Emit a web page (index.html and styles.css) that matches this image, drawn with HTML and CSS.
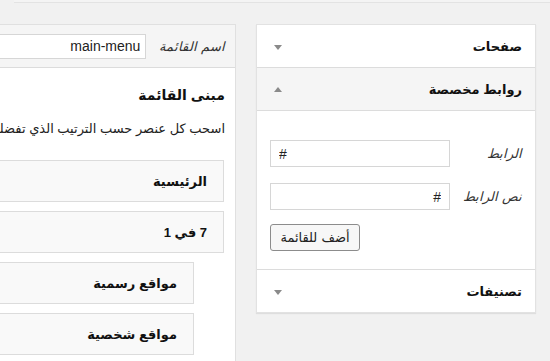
FILE: index.html
```html
<!DOCTYPE html>
<html lang="ar" dir="rtl">
<head>
<meta charset="utf-8">
<link rel="stylesheet" href="styles.css">
</head>
<body>
<div class="topbox"></div>
<div class="wrap">
  <div class="side">
    <div class="acc">
      <div class="acc-head"><span>صفحات</span><i class="arrow down"></i></div>
      <div class="acc-head open"><span>روابط مخصصة</span><i class="arrow up"></i></div>
      <div class="acc-body">
        <div class="row"><label class="lbl">الرابط</label><input class="field ltr" type="text" value="#"></div>
        <div class="row"><label class="lbl">نص الرابط</label><input class="field" type="text" value="#"></div>
        <div class="btn-row"><button class="btn">أضف للقائمة</button></div>
      </div>
      <div class="acc-head last"><span>تصنيفات</span><i class="arrow down"></i></div>
    </div>
  </div>
  <div class="main">
    <div class="main-head">
      <label class="lbl">اسم القائمة</label>
      <input class="name-input" type="text" value="main-menu">
    </div>
    <div class="main-body">
      <h3 class="title">مبنى القائمة</h3>
      <p class="desc">اسحب كل عنصر حسب الترتيب الذي تفضله. اضغط على السهم الموجود على يمين العنصر لإظهار خيارات ضبط إضافية.</p>
      <ul class="items">
        <li class="item">الرئيسية</li>
        <li class="item">7 في 1</li>
        <li class="item sub">مواقع رسمية</li>
        <li class="item sub">مواقع شخصية</li>
      </ul>
    </div>
  </div>
</div>
</body>
</html>
```

FILE: styles.css
```css
html, body {
  margin: 0;
  padding: 0;
  height: 100%;
  overflow: hidden;
}
body {
  background: #f1f1f1;
  font-family: "Liberation Sans", "DejaVu Sans", sans-serif;
  font-size: 13px;
  color: #222;
  direction: rtl;
}
.topbox {
  height: 2px;
  background: #f4f4f4;
  border-bottom: 1px solid #e3e3e3;
  margin-left: 14px;
}
.wrap {
  display: flex;
  flex-direction: row;
  gap: 20px;
  padding-top: 21px;
  padding-right: 14px;
}
.side {
  width: 280px;
  flex-shrink: 0;
}
.acc {
  background: #fff;
  border: 1px solid #e2e2e2;
  box-shadow: 0 1px 1px rgba(0,0,0,0.08);
}
.acc-head {
  height: 42px;
  display: flex;
  align-items: center;
  justify-content: space-between;
  padding: 0 13px 0 13px;
  border-bottom: 1px solid #dcdcdc;
  font-weight: bold;
  font-size: 13px;
  color: #111;
}
.acc-head.open {
  background: #f5f5f5;
}
.acc-head.last {
  border-bottom: 0;
}
.arrow {
  width: 0;
  height: 0;
  border-left: 4px solid transparent;
  border-right: 4px solid transparent;
  margin-left: 4px;
}
.arrow.down {
  border-top: 5px solid #8a8a8a;
  margin-top: 3px;
}
.arrow.up {
  border-bottom: 5px solid #8a8a8a;
}
.acc-body {
  padding: 29px 13px 18px 13px;
  border-bottom: 1px solid #dcdcdc;
}
.row {
  display: flex;
  align-items: center;
  justify-content: space-between;
  margin-bottom: 16px;
}
.row + .row {
  margin-bottom: 14px;
}
.lbl {
  font-style: italic;
  font-size: 13px;
  color: #333;
}
.field {
  width: 180px;
  height: 27px;
  box-sizing: border-box;
  border: 1px solid #d6d6d6;
  padding: 0 8px;
  font-family: "Liberation Sans", "DejaVu Sans", sans-serif;
  font-size: 14px;
  color: #222;
  background: #fff;
  margin: 0;
}
.field.ltr {
  direction: ltr;
}
.btn-row {
  display: flex;
  justify-content: flex-end;
}
.btn {
  height: 27px;
  width: 90px;
  box-sizing: border-box;
  border: 1px solid #8c8c8c;
  border-radius: 3px;
  background: #f7f7f7;
  font-family: "DejaVu Sans", sans-serif;
  font-size: 13px;
  color: #222;
  padding: 0;
}
.main {
  width: 460px;
  flex-shrink: 0;
  background: #fff;
  border: 1px solid #e0e0e0;
  border-bottom: 0;
  min-height: 400px;
}
.main-head {
  height: 42px;
  background: #f5f5f5;
  border-bottom: 1px solid #dcdcdc;
  display: flex;
  align-items: center;
  gap: 13px;
  padding-right: 10px;
}
.name-input {
  width: 250px;
  height: 25px;
  box-sizing: border-box;
  border: 1px solid #d6d6d6;
  padding: 0 5px;
  font-family: "Liberation Sans", sans-serif;
  font-size: 14px;
  color: #222;
  background: #fff;
  margin: 0;
}
.main-body {
  padding: 0 10px 0 0;
}
.title {
  margin: 18px 0 0 0;
  font-size: 14px;
  font-weight: bold;
  color: #111;
  line-height: 18px;
}
.desc {
  margin: 16px 0 0 0;
  white-space: nowrap;
  font-size: 13px;
  color: #222;
  line-height: 18px;
}
.items {
  list-style: none;
  margin: 22px 1px 0 0;
  padding: 0;
  display: flex;
  flex-direction: column;
  gap: 9px;
}
.item {
  height: 42px;
  box-sizing: border-box;
  background: #f9f9f9;
  border: 1px solid #dcdcdc;
  display: flex;
  align-items: center;
  padding-right: 16px;
  font-weight: bold;
  font-size: 13px;
  color: #111;
}
.item.sub {
  margin-right: 30px;
}
```
